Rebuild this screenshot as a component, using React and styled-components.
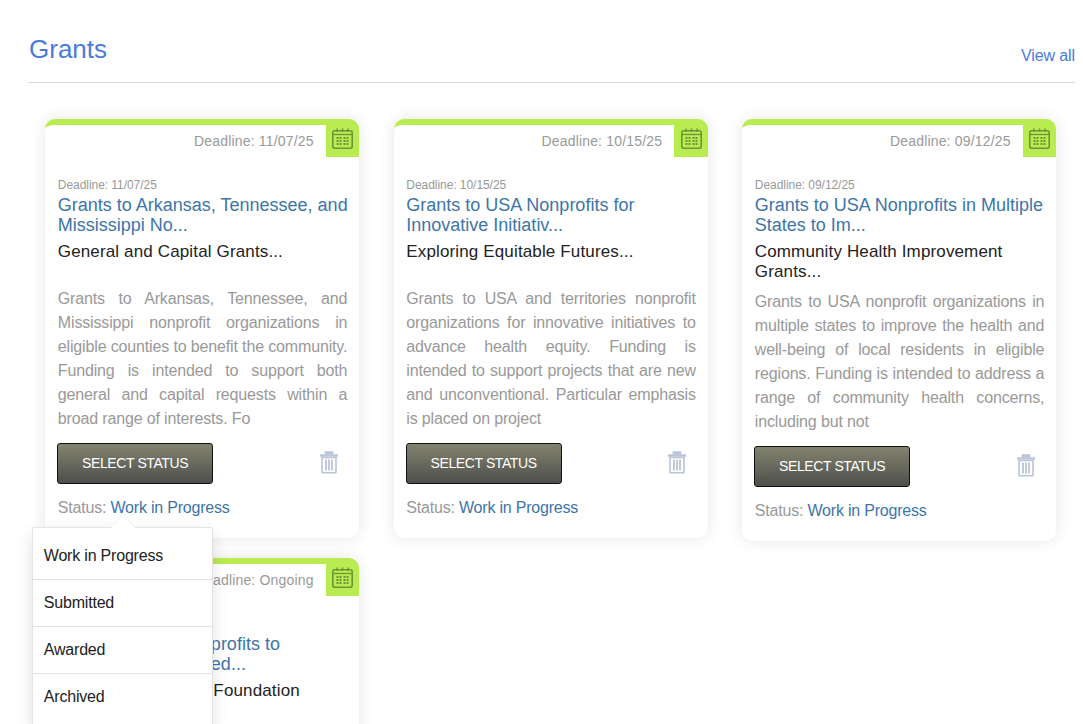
import React from 'react';
import styled, { createGlobalStyle } from 'styled-components';

const GlobalStyle = createGlobalStyle`
  html, body {
    margin: 0;
    padding: 0;
    height: 100%;
    overflow: hidden;
    background: #fff;
    font-family: "Liberation Sans", Arial, sans-serif;
  }
  * { box-sizing: border-box; }
`;

const Page = styled.div`
  padding: 31px 8px 0 28px;
`;

const Header = styled.div`
  display: flex;
  justify-content: space-between;
  align-items: flex-end;
  height: 52px;
  padding-bottom: 18px;
  border-bottom: 1px solid #d8d8d8;
`;

const Title = styled.h1`
  margin: 0;
  padding-left: 1px;
  font-size: 26px;
  font-weight: 400;
  line-height: 30px;
  color: #4a7bdc;
`;

const ViewAll = styled.a`
  font-size: 16px;
  line-height: 18px;
  letter-spacing: -0.1px;
  color: #4a7bdc;
  margin-bottom: -1px;
`;

const Grid = styled.div`
  display: grid;
  grid-template-columns: repeat(3, 314px);
  column-gap: 34.5px;
  row-gap: 17px;
  align-items: start;
  margin: 36px 0 0 17px;
`;

const Card = styled.div`
  width: 314px;
  background: #fff;
  border-top: 6px solid #b9ec51;
  border-radius: 10px;
  box-shadow: 0 0 16px rgba(0, 0, 0, 0.1);
`;

const CardTop = styled.div`
  display: flex;
  justify-content: flex-end;
  align-items: stretch;
  height: 32px;
`;

const TopDeadline = styled.span`
  font-size: 14px;
  line-height: 20px;
  letter-spacing: 0.17px;
  padding-top: 6px;
  margin-right: 12px;
  color: #999;
`;

const CalendarBox = styled.div`
  width: 33.4px;
  background: #b9ec51;
  display: flex;
  justify-content: center;
  padding: 3px 0 0 1px;
  border-top-right-radius: 4px;
`;

const CardBody = styled.div`
  padding: 21px 11.7px 20px 12.8px;
`;

const SmallDeadline = styled.div`
  font-size: 12px;
  line-height: 14px;
  height: 17px;
  letter-spacing: -0.05px;
  color: #999;
`;

const GrantTitle = styled.a`
  display: block;
  font-size: 18px;
  line-height: 20px;
  color: #3d75a8;
  margin: 0 -2px 6px 0;
`;

const Subtitle = styled.div`
  font-size: 17px;
  line-height: 20px;
  letter-spacing: 0.14px;
  min-height: 38px;
  margin-bottom: 8px;
  padding-top: 1px;
  color: #222;
`;

const Description = styled.p`
  margin: 0;
  font-size: 16px;
  line-height: 24px;
  letter-spacing: -0.15px;
  text-align: justify;
  color: #999;
`;

const Actions = styled.div`
  display: flex;
  justify-content: space-between;
  align-items: center;
  margin: 12px 0 0 -0.7px;
`;

const StatusButton = styled.button`
  width: 156px;
  height: 41px;
  padding: 0 0 2px;
  border: 1px solid #111;
  border-radius: 3px;
  background: linear-gradient(to bottom, #82836f 0%, #4e4f4b 100%);
  color: #fff;
  font-family: inherit;
  font-size: 14px;
  letter-spacing: -0.4px;
  text-transform: uppercase;
`;

const TrashButton = styled.span`
  display: flex;
  margin: -2px 8.5px 0 0;
`;

const StatusLine = styled.div`
  position: relative;
  margin-top: 14px;
  font-size: 16px;
  line-height: 20px;
  letter-spacing: -0.2px;
  color: #999;
`;

const StatusValue = styled.a`
  color: #3d75a8;
`;

const Menu = styled.ul`
  position: absolute;
  z-index: 2;
  top: 29px;
  left: -26px;
  width: 181px;
  margin: 0;
  padding: 5px 0;
  list-style: none;
  background: #fff;
  border: 1px solid #e4e4e4;
  border-radius: 2px;
  box-shadow: 0 6px 16px rgba(0, 0, 0, 0.12);

  &::before {
    content: '';
    position: absolute;
    top: -12px;
    left: 78px;
    border-left: 12px solid transparent;
    border-right: 12px solid transparent;
    border-bottom: 12px solid #fff;
    filter: drop-shadow(0 -1px 1px rgba(0, 0, 0, 0.06));
  }
`;

const MenuItem = styled.li`
  height: 47px;
  padding: 0 11px;
  font-size: 16px;
  line-height: 46px;
  color: #222;
  border-bottom: 1px solid #e2e2e2;

  &:last-child {
    border-bottom: 0;
  }
`;

const CalendarIcon = () => (
  <svg width="21" height="22" viewBox="0 0 21 22" fill="none" stroke="#6c9638" strokeWidth="1.6">
    <rect x="0.8" y="2.8" width="19.4" height="17.4" rx="2" />
    <path d="M1 6.500h19" strokeWidth="1.3" />
    <path d="M5 0.500v3.500M10.500 0.500v3.500M16 0.500v3.500" strokeWidth="1.5" />
    <path
      d="M4.500 9h2v2h-2zM7.500 9h2v2h-2zM11.500 9h2v2h-2zM14.500 9h2v2h-2zM4.500 12h2v2h-2zM7.500 12h2v2h-2zM11.500 12h2v2h-2zM14.500 12h2v2h-2zM4.500 15h2v2h-2zM7.500 15h2v2h-2zM11.500 15h2v2h-2zM14.500 15h2v2h-2z"
      fill="#6c9638"
      stroke="none"
    />
  </svg>
);

const TrashIcon = () => (
  <svg width="20" height="23" viewBox="0 0 20 23" fill="none" stroke="#b9c5d9" strokeWidth="1.6">
    <path d="M6.500 3.500V1h7v2.500" fill="#b9c5d9" />
    <path d="M1 4.500h18" strokeWidth="2.4" />
    <path d="M3 6.500h14V21a.8.8 0 0 1-.8.8H3.800A.8.8 0 0 1 3 21z" />
    <path d="M7 8.500v11M10 8.500v11M13 8.500v11" strokeWidth="1.8" />
  </svg>
);

const grants = [
  {
    deadline: '11/07/25',
    title: 'Grants to Arkansas, Tennessee, and Mississippi No...',
    subtitle: 'General and Capital Grants...',
    text: 'Grants to Arkansas, Tennessee, and Mississippi nonprofit organizations in eligible counties to benefit the community. Funding is intended to support both general and capital requests within a broad range of interests. Fo',
    menuOpen: true,
  },
  {
    deadline: '10/15/25',
    title: 'Grants to USA Nonprofits for Innovative Initiativ...',
    subtitle: 'Exploring Equitable Futures...',
    text: 'Grants to USA and territories nonprofit organizations for innovative initiatives to advance health equity. Funding is intended to support projects that are new and unconventional. Particular emphasis is placed on project',
  },
  {
    deadline: '09/12/25',
    title: 'Grants to USA Nonprofits in Multiple States to Im...',
    subtitle: 'Community Health Improvement Grants...',
    text: 'Grants to USA nonprofit organizations in multiple states to improve the health and well-being of local residents in eligible regions. Funding is intended to address a range of community health concerns, including but not',
  },
  {
    deadline: 'Ongoing',
    title: 'Grants to USA Nonprofits to Address Marginalized...',
    subtitle: 'Healthy Community Foundation',
    text: '',
  },
];

const statuses = ['Work in Progress', 'Submitted', 'Awarded', 'Archived'];

const GrantCard = ({ grant }) => (
  <Card>
    <CardTop>
      <TopDeadline>Deadline: {grant.deadline}</TopDeadline>
      <CalendarBox>
        <CalendarIcon />
      </CalendarBox>
    </CardTop>
    <CardBody>
      <SmallDeadline>Deadline: {grant.deadline}</SmallDeadline>
      <GrantTitle>{grant.title}</GrantTitle>
      <Subtitle>{grant.subtitle}</Subtitle>
      <Description>{grant.text}</Description>
      <Actions>
        <StatusButton>Select Status</StatusButton>
        <TrashButton>
          <TrashIcon />
        </TrashButton>
      </Actions>
      <StatusLine>
        Status: <StatusValue>Work in Progress</StatusValue>
        {grant.menuOpen && (
          <Menu>
            {statuses.map((s) => (
              <MenuItem key={s}>{s}</MenuItem>
            ))}
          </Menu>
        )}
      </StatusLine>
    </CardBody>
  </Card>
);

export default function App() {
  return (
    <Page>
      <GlobalStyle />
      <Header>
        <Title>Grants</Title>
        <ViewAll>View all</ViewAll>
      </Header>
      <Grid>
        {grants.map((g) => (
          <GrantCard key={g.deadline} grant={g} />
        ))}
      </Grid>
    </Page>
  );
}
